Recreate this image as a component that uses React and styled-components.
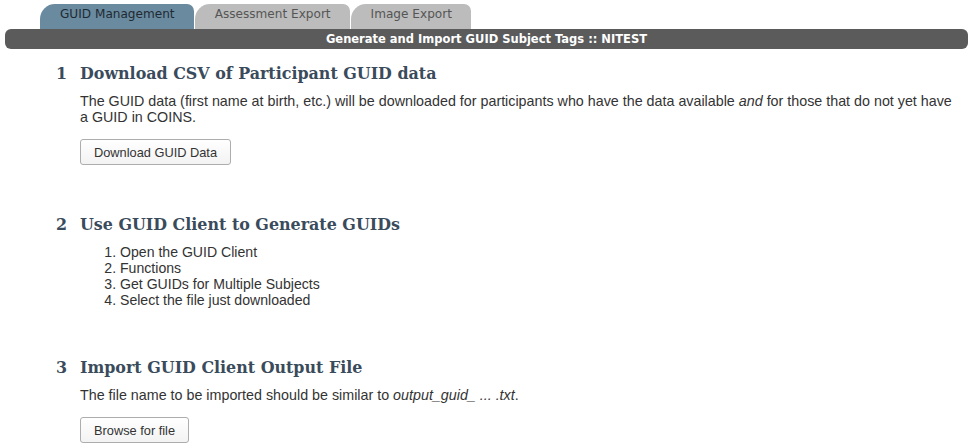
import React from 'react';
import styled, { createGlobalStyle } from 'styled-components';

const GlobalStyle = createGlobalStyle`
  body {
    margin: 0;
    background: #fff;
    font-family: "Liberation Sans", Arial, sans-serif;
    color: #333;
  }
`;

const Page = styled.div`
  padding: 4px 3px 0 5px;
`;

const TabRow = styled.div`
  display: flex;
  align-items: flex-end;
  gap: 1px;
  margin-left: 35px;
`;

const Tab = styled.div`
  height: 25px;
  padding: 2px 19px 0 20px;
  box-sizing: border-box;
  border-radius: 15px 7px 0 0;
  background: ${({ $active }) => ($active ? '#6a8aa0' : '#bcbcbc')};
  color: ${({ $active }) => ($active ? '#1e2a33' : '#555')};
  font-family: "DejaVu Sans", Tahoma, sans-serif;
  font-size: 12.1px;
  line-height: 16px;
  white-space: nowrap;
  cursor: pointer;
`;

const TitleBar = styled.div`
  height: 20px;
  border-radius: 6px;
  background: #5b5b5b;
  color: #fff;
  font-family: "DejaVu Sans", Tahoma, sans-serif;
  font-weight: bold;
  font-size: 11.5px;
  line-height: 20px;
  text-align: center;
`;

const Section = styled.section`
  padding: 0 10px 0 51px;
  margin-top: ${({ $first }) => ($first ? '13px' : '48px')};
`;

const Heading = styled.h2`
  display: flex;
  margin: 0;
  font-family: "DejaVu Serif", Cambria, serif;
  font-weight: bold;
  font-size: 15.9px;
  line-height: 24px;
  color: #3a4b5b;
`;

const StepNum = styled.span`
  width: 24px;
  flex-shrink: 0;
`;

const Body = styled.div`
  margin-left: 24px;
  padding-top: 7px;
`;

const Text = styled.p`
  margin: 0;
  font-size: 14.3px;
  line-height: 16px;
`;

const Steps = styled.ol`
  margin: 0;
  padding-left: 40px;
  font-size: 14.1px;
  line-height: 16px;
`;

const Button = styled.button`
  display: block;
  margin-top: 14px;
  height: 26px;
  padding: 0 13px;
  border: 1px solid #adadad;
  border-radius: 3px;
  background: linear-gradient(#ffffff, #f3f3f3);
  font-family: "Liberation Sans", Arial, sans-serif;
  font-size: 12.8px;
  color: #333;
  cursor: pointer;
`;

export default function App() {
  return (
    <>
      <GlobalStyle />
      <Page>
        <TabRow>
          <Tab $active>GUID Management</Tab>
          <Tab>Assessment Export</Tab>
          <Tab>Image Export</Tab>
        </TabRow>
        <TitleBar>Generate and Import GUID Subject Tags :: NITEST</TitleBar>

        <Section $first>
          <Heading>
            <StepNum>1</StepNum>Download CSV of Participant GUID data
          </Heading>
          <Body>
            <Text>
              The GUID data (first name at birth, etc.) will be downloaded for participants who have the data
              available <em>and</em> for those that do not yet have a GUID in COINS.
            </Text>
            <Button>Download GUID Data</Button>
          </Body>
        </Section>

        <Section>
          <Heading>
            <StepNum>2</StepNum>Use GUID Client to Generate GUIDs
          </Heading>
          <Body>
            <Steps>
              <li>Open the GUID Client</li>
              <li>Functions</li>
              <li>Get GUIDs for Multiple Subjects</li>
              <li>Select the file just downloaded</li>
            </Steps>
          </Body>
        </Section>

        <Section>
          <Heading>
            <StepNum>3</StepNum>Import GUID Client Output File
          </Heading>
          <Body>
            <Text>
              The file name to be imported should be similar to <em>output_guid_ ... .txt</em>.
            </Text>
            <Button>Browse for file</Button>
          </Body>
        </Section>
      </Page>
    </>
  );
}
